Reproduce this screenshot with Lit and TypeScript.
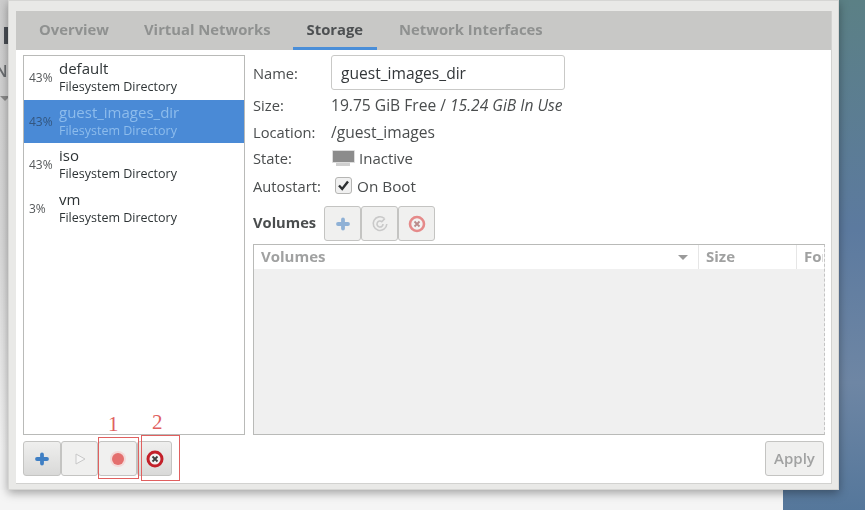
import { LitElement, html, css, svg } from "lit";
import { customElement } from "lit/decorators.js";

const pools = [
  { pct: "43%", name: "default", sel: false },
  { pct: "43%", name: "guest_images_dir", sel: true },
  { pct: "43%", name: "iso", sel: false },
  { pct: "3%", name: "vm", sel: false },
];

const plus = (c: string) => svg`<svg width="14" height="14" viewBox="0 0 14 14"><path d="M7 2.5v9M2 7h10" stroke="${c}" stroke-width="3.8" stroke-linecap="round"/></svg>`;
const del = (ring: string, x: string, sw = 2.6) => svg`<svg width="20" height="20" viewBox="0 0 20 20"><circle cx="10" cy="10" r="7" fill="#f2f2f2" stroke="${ring}" stroke-width="${sw}"/><path d="M7.5 7.5l5 5M12.5 7.5l-5 5" stroke="${x}" stroke-width="1.8"/></svg>`;

@customElement("app-root")
export class AppRoot extends LitElement {
  static styles = css`
    :host { display: block; width: 865px; height: 510px; overflow: hidden; position: relative; background: #fafafa; font-family: "Open Sans", "Noto Sans", sans-serif; color: #4a4d4e; font-size: 14.7px; }
    .back { position: absolute; left: 0; top: 0; width: 8px; height: 490px; overflow: hidden; background: linear-gradient(#cdcdcd, #d8d8d8 50%, #f2f2f2 92%); filter: blur(.6px); }
    .back i { position: absolute; left: 4px; top: 27px; width: 4px; height: 17px; background: #4a4f55; }
    .back u { position: absolute; left: -5px; top: 60px; font-size: 16px; font-weight: 600; color: #6a6d70; text-decoration: none; }
    .back s { position: absolute; left: 0; top: 96px; width: 0; height: 0; border: 5px solid transparent; border-top: 5px solid #8a8a8a; border-bottom: 0; }
    .desk { position: absolute; right: 0; top: 0; bottom: 0; width: 82px; background: linear-gradient(#5b8085, #5c7a9f 45%, #6e86a4 75%, #55779b); clip-path: polygon(0 490px, 56px 490px, 56px 0, 82px 0, 82px 510px, 0 510px); }
    .bottom { position: absolute; left: 0; right: 82px; top: 490px; bottom: 0; background: #f5f5f5; }
    .frame { position: absolute; left: 8px; top: 0; width: 831px; height: 490px; box-sizing: border-box; background: #e9e9e7; border: 1px solid #d6d6d4; padding: 10px 6px 6px 7px; box-shadow: 0 3px 9px rgba(0,0,0,.35); filter: blur(.6px); }
    .win { height: 100%; background: #fff; border-right: 1px solid #d2d2d0; border-bottom: 1px solid #d2d2d0; display: flex; flex-direction: column; }
    .tabs { height: 39px; flex: none; background: #c8c8c6; display: flex; box-sizing: border-box; }
    .tab { font-weight: 700; color: #8f9190; font-size: 14.8px; display: flex; align-items: center; box-sizing: border-box; white-space: nowrap; padding-bottom: 3px; }
    .tab.on { color: #4d5052; border-bottom: 3px solid #4a8ed8; margin-left: 22px; padding: 0 14px; }
    .t1 { margin-left: 23px; }
    .t2 { margin-left: 35px; }
    .t4 { margin-left: 22px; }
    .body { flex: 1; display: grid; grid-template-columns: 222px 1fr; column-gap: 8px; padding: 5px 6px 0 7px; min-height: 0; }
    .list { border: 1px solid #b9bab8; height: 380px; box-sizing: border-box; background: #fff; }
    .row { height: 43.5px; display: grid; grid-template-columns: 35px 1fr; align-items: center; color: #2e3436; }
    .row.sel { background: #4a8ad6; color: #8dbcec; }
    .pct { font-size: 12px; padding-left: 5px; color: #55585a; }
    .sel .pct { color: #33567f; }
    .nm { font-size: 15px; line-height: 19px; white-space: nowrap; }
    .ty { font-size: 12.5px; line-height: 18px; white-space: nowrap; }
    .detail { display: flex; flex-direction: column; height: 380px; }
    .f { display: grid; grid-template-columns: 78px 1fr; align-items: center; height: 26.5px; white-space: nowrap; }
    .f.first { height: 35px; margin-bottom: 2px; }
    .f.auto { margin-top: 1px; }
    .val { font-size: 15.6px; }
    .entry { width: 234px; height: 35px; box-sizing: border-box; border: 1px solid #c9c9c7; border-radius: 3px; padding-left: 9px; display: flex; align-items: center; color: #33373a; font-size: 15.6px; }
    .icn { display: flex; align-items: center; gap: 4px; font-size: 15px; }
    .icn.on { gap: 5px; font-size: 15.3px; }
    .mon { width: 24px; height: 17px; display: flex; flex-direction: column; align-items: center; }
    .mon i { display: block; width: 23px; height: 13px; background: #8c8c8c; border: 1px solid #ddd; box-sizing: border-box; border-radius: 1px; }
    .mon b { display: block; width: 14px; height: 3px; background: #cfcfcf; }
    .chk { width: 17px; height: 17px; margin-left: 4px; box-sizing: border-box; border: 1px solid #b5b5b3; border-radius: 3px; background: #f0f0f0; display: flex; align-items: center; justify-content: center; }
    .vh { display: flex; align-items: center; height: 36px; margin-top: 6.5px; font-weight: 700; font-size: 14.7px; }
    .vh span { width: 71px; padding-bottom: 3px; }
    .tools { display: flex; }
    .tb { width: 37px; height: 35px; box-sizing: border-box; border: 1px solid #c4c4c2; border-radius: 3px; background: #f0f0ef; display: flex; align-items: center; justify-content: center; }
    .table { flex: 1; margin-top: 2.5px; border: 1px solid #b9bab8; border-right: 1px dashed #c4c4c4; display: flex; flex-direction: column; background: #f0f0f0; min-height: 0; overflow: hidden; }
    .th { height: 24px; flex: none; background: #fff; display: grid; grid-template-columns: 445px 98px 26px; color: #a0a1a1; font-weight: 700; font-size: 15px; overflow: hidden; }
    .th div { padding: 0 0 2px 7px; display: flex; align-items: center; border-right: 1px solid #e6e6e6; position: relative; white-space: nowrap; overflow: hidden; }
    .th div:last-child { border-right: 0; }
    .arrow { position: absolute; right: 10px; top: 10px; width: 0; height: 0; border: 5.5px solid transparent; border-top: 5px solid #9a9a9a; border-bottom: 0; }
    .foot { display: flex; justify-content: space-between; align-items: center; padding: 0 7px 2px 7px; height: 47px; box-sizing: border-box; flex: none; }
    .btns { display: flex; }
    .btn { height: 35px; box-sizing: border-box; border: 1px solid #c4c4c2; border-radius: 3px; background: linear-gradient(#efefee, #d9d9d8); display: flex; align-items: center; justify-content: center; }
    .btn.dis { background: #f0f0ef; }
    .apply { width: 59px; color: #a1a2a2; font-weight: 600; font-size: 15px; background: #f0f0ef; padding-bottom: 2px; }
    .mark { position: absolute; box-sizing: border-box; border: 1.5px solid #e0605f; }
    .num { position: absolute; color: #e0605f; font-family: "Liberation Serif", serif; font-size: 21px; line-height: 21px; }
  `;

  render() {
    return html`
      <div class="back"><i></i><u>N</u><s></s></div>
      <div class="bottom"></div>
      <div class="desk"></div>
      <div class="frame"><div class="win">
        <div class="tabs">
          <div class="tab t1">Overview</div>
          <div class="tab t2">Virtual Networks</div>
          <div class="tab on">Storage</div>
          <div class="tab t4">Network Interfaces</div>
        </div>
        <div class="body">
          <div class="list">
            ${pools.map(p => html`<div class="row ${p.sel ? "sel" : ""}"><div class="pct">${p.pct}</div><div><div class="nm">${p.name}</div><div class="ty">Filesystem Directory</div></div></div>`)}
          </div>
          <div class="detail">
            <div class="f first"><div>Name:</div><div class="entry">guest_images_dir</div></div>
            <div class="f"><div>Size:</div><div class="val">19.75 GiB Free / <em>15.24 GiB In Use</em></div></div>
            <div class="f"><div>Location:</div><div class="val">/guest_images</div></div>
            <div class="f"><div>State:</div><div class="icn"><span class="mon"><i></i><b></b></span>Inactive</div></div>
            <div class="f auto"><div>Autostart:</div><div class="icn on"><span class="chk"><svg width="13" height="13" viewBox="0 0 13 13"><path d="M2 6.5l3.2 3.5L11 2.5" fill="none" stroke="#2b2e30" stroke-width="2.4"/></svg></span>On Boot</div></div>
            <div class="vh"><span>Volumes</span><div class="tools">
              <div class="tb">${plus("#8fb1d6")}</div>
              <div class="tb"><svg width="18" height="18" viewBox="0 0 18 18"><path d="M13.5 3.5A6.8 6.8 0 1 0 15.8 9M12 9a3 3 0 1 1-1.2-2.4L14 3.5" fill="none" stroke="#c9c9c9" stroke-width="1.6"/></svg></div>
              <div class="tb">${del("#e58a8a", "#b98a8a")}</div>
            </div></div>
            <div class="table">
              <div class="th"><div>Volumes<span class="arrow"></span></div><div>Size</div><div>For</div></div>
            </div>
          </div>
        </div>
        <div class="foot">
          <div class="btns">
            <div class="btn" style="width:38px">${plus("#3f7fc4")}</div>
            <div class="btn dis" style="width:37px"><svg width="14" height="14" viewBox="0 0 14 14"><path d="M3 2l9 5-9 5z" fill="#f6f6f6" stroke="#c8c8c8"/></svg></div>
            <div class="btn dis" style="width:39px"><svg width="18" height="18" viewBox="0 0 18 18"><circle cx="9" cy="9" r="8" fill="#f3d9d8"/><circle cx="9" cy="9" r="6" fill="#e46f6e"/></svg></div>
            <div class="btn" style="width:35px">${del("#c3202a", "#3d3d3d", 3)}</div>
          </div>
          <div class="btn apply">Apply</div>
        </div>
      </div></div>
      <div class="mark" style="left:98px;top:437px;width:41px;height:42px"></div>
      <div class="mark" style="left:141px;top:435px;width:39px;height:46px"></div>
      <div class="num" style="left:108px;top:414px">1</div>
      <div class="num" style="left:152px;top:412px">2</div>
    `;
  }
}
